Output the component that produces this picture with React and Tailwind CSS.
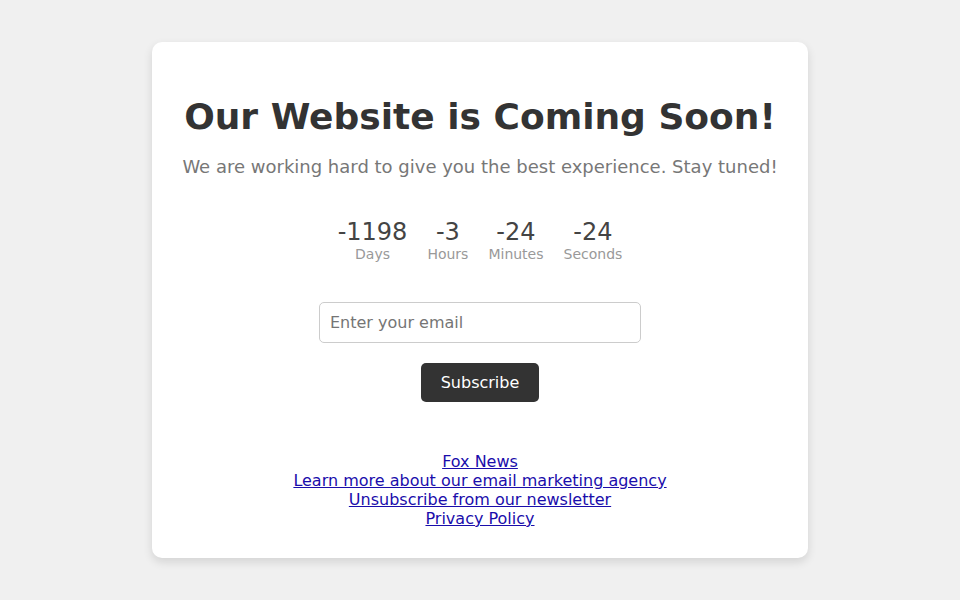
export default function App() {
  const units = [
    { value: -1198, label: 'Days' },
    { value: -3, label: 'Hours' },
    { value: -24, label: 'Minutes' },
    { value: -24, label: 'Seconds' },
  ];

  const links = [
    'Fox News',
    'Learn more about our email marketing agency',
    'Unsubscribe from our newsletter',
    'Privacy Policy',
  ];

  return (
    <div className="min-h-screen bg-[#f0f0f0] font-['DejaVu_Sans',sans-serif] flex justify-center pt-[42px]">
      <div className="w-[656px] h-[516px] bg-white rounded-[10px] shadow-[0_4px_10px_rgba(0,0,0,0.12)] p-[30px] text-center">
        {/* Heading */}
        <h1 className="mt-[24px] text-[36px] leading-[42px] font-bold text-[#333]">
          Our Website is Coming Soon!
        </h1>
        <p className="mt-[18px] text-[18px] leading-[21px] text-[#777]">
          We are working hard to give you the best experience. Stay tuned!
        </p>

        {/* Countdown */}
        <div className="mt-[41px] flex justify-center">
          {units.map((u) => (
            <div key={u.label} className="mx-[10px] flex flex-col items-center">
              <span className="text-[24px] leading-[28px] text-[#444]">{u.value}</span>
              <span className="text-[14px] leading-[17px] text-[#999]">{u.label}</span>
            </div>
          ))}
        </div>

        {/* Subscribe form */}
        <div className="mt-[39px] flex flex-col items-center">
          <input
            type="email"
            placeholder="Enter your email"
            className="w-[322px] h-[41px] px-[10px] border border-[#ccc] rounded-[5px] text-[16px] text-[#333] placeholder:text-[#757575] outline-none"
          />
          <button className="mt-[20px] h-[39px] px-[20px] bg-[#333] text-white text-[16px] rounded-[5px]">
            Subscribe
          </button>
        </div>

        {/* Footer links */}
        <div className="mt-[50px] flex flex-col items-center">
          {links.map((l) => (
            <a key={l} href="#" className="text-[16px] leading-[19px] text-[#1a0dab] underline">
              {l}
            </a>
          ))}
        </div>
      </div>
    </div>
  );
}
